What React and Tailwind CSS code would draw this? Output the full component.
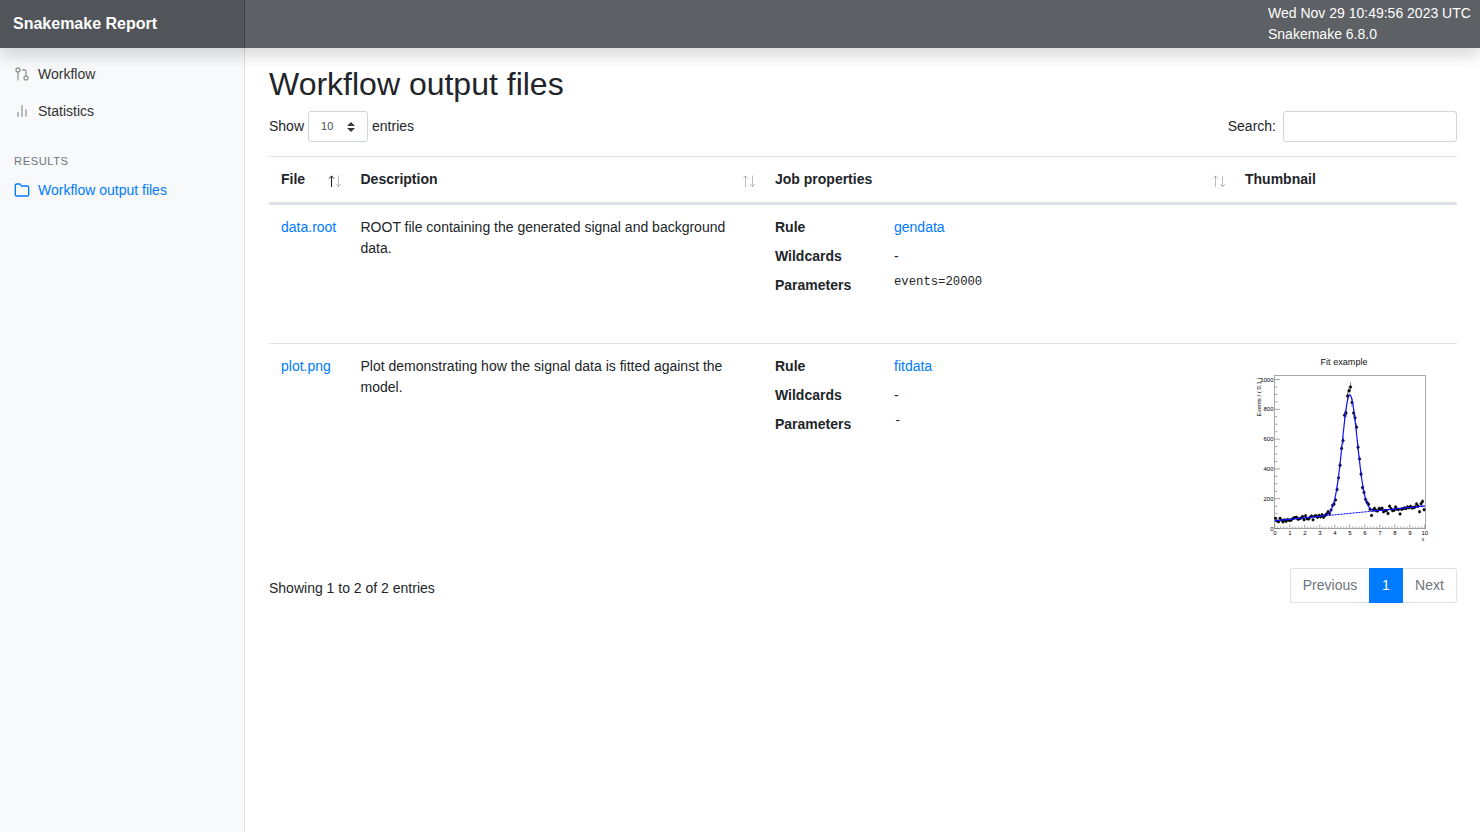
const POINTS = [
  [0.05, 68], [0.15, 50], [0.25, 45], [0.35, 68], [0.45, 56], [0.55, 44], [0.65, 58], [0.75, 48],
  [0.85, 60], [0.95, 55], [1.05, 54], [1.15, 62], [1.25, 70], [1.35, 73], [1.45, 75], [1.55, 62],
  [1.65, 66], [1.75, 70], [1.85, 80], [1.95, 58], [2.05, 86], [2.15, 66], [2.25, 63], [2.35, 75],
  [2.45, 84], [2.55, 58], [2.65, 83], [2.75, 86], [2.85, 75], [2.95, 88], [3.05, 78], [3.15, 92],
  [3.25, 75], [3.35, 88], [3.45, 98], [3.55, 112], [3.65, 101], [3.75, 124], [3.85, 155], [3.95, 164],
  [4.05, 192], [4.15, 262], [4.25, 340], [4.35, 425], [4.45, 537], [4.55, 590], [4.65, 760], [4.75, 775],
  [4.85, 890], [4.95, 925], [5.05, 950], [5.15, 845], [5.25, 775], [5.35, 742], [5.45, 680], [5.55, 545],
  [5.65, 467], [5.75, 365], [5.85, 275], [5.95, 242], [6.05, 195], [6.15, 175], [6.25, 162], [6.35, 130],
  [6.45, 88], [6.55, 124], [6.65, 135], [6.75, 120], [6.85, 118], [6.95, 135], [7.05, 130], [7.15, 136],
  [7.25, 112], [7.35, 120], [7.45, 120], [7.55, 100], [7.65, 150], [7.75, 132], [7.85, 120], [7.95, 122],
  [8.05, 145], [8.15, 130], [8.25, 128], [8.35, 98], [8.45, 130], [8.55, 133], [8.65, 138], [8.75, 135],
  [8.85, 145], [8.95, 140], [9.05, 148], [9.15, 138], [9.25, 140], [9.35, 145], [9.45, 165], [9.55, 150],
  [9.65, 112], [9.75, 166], [9.85, 182], [9.95, 126],
];
const px = (x) => 29.8 + x * 15;
const py = (y) => 172.5 - y * 0.149;
const background = (x) => 52 + x * 9.9;
const curve = (() => {
  let d = "";
  for (let i = 0; i <= 200; i++) {
    const x = i / 20;
    const y = background(x) + 795 * Math.exp(-((x - 5) ** 2) / (2 * 0.5 ** 2));
    d += `${i ? "L" : "M"}${px(x).toFixed(2)} ${py(y).toFixed(2)}`;
  }
  return d;
})();

function FitPlot() {
  return (
    <svg width="200" height="192" viewBox="0 0 200 192" className="block font-['Liberation_Sans',sans-serif]">
      <text x="99" y="9.4" fontSize="9" textAnchor="middle" fill="#111" textLength="47">Fit example</text>
      <rect x="29.5" y="19.5" width="151" height="153" fill="none" stroke="#aaa" strokeWidth="1" />
      <g stroke="#666" strokeWidth="0.6">
        {Array.from({ length: 21 }, (_, i) => (
          <path key={i} d={`M30 ${py(i * 50)}h${i % 4 ? 2.5 : 5}`} />
        ))}
        {Array.from({ length: 51 }, (_, i) => (
          <path key={i} d={`M${px(i / 5)} 172.5v${i % 5 ? -2 : -4}`} />
        ))}
      </g>
      <g fontSize="6" fill="#000">
        {[0, 200, 400, 600, 800, 1000].map((v) => (
          <text key={v} x="28.5" y={py(v) + 2.1} textAnchor="end">{v}</text>
        ))}
        {Array.from({ length: 11 }, (_, i) => (
          <text key={i} x={px(i)} y="179" textAnchor="middle">{i}</text>
        ))}
        <text x="178" y="185" fontSize="5" textAnchor="middle">x</text>
        <text transform="translate(15.6 60.5) rotate(-90)" textLength="39">Events / ( 0.1 )</text>
      </g>
      <path d={`M${px(0)} ${py(52)}L${px(10)} ${py(151)}`} stroke="#00f" strokeWidth="1" strokeDasharray="2.2 0.8" />
      <g fill="#000" stroke="#000" strokeWidth="0.5">
        {POINTS.map(([x, y]) => (
          <g key={x}>
            <path d={`M${px(x)} ${py(y + Math.sqrt(y))}V${py(y - Math.sqrt(y))}`} />
            <circle cx={px(x)} cy={py(y)} r="1.25" />
          </g>
        ))}
      </g>
      <path d={curve} fill="none" stroke="#1010ff" strokeWidth="1.2" />
    </svg>
  );
}

function Icon({ children, className }) {
  return (
    <svg width="16" height="16" viewBox="0 0 24 24" fill="none" stroke="currentColor" strokeWidth="2" strokeLinecap="round" strokeLinejoin="round" className={`relative -top-px ${className}`}>
      {children}
    </svg>
  );
}

function HeaderCell({ children, sort }) {
  return (
    <div className="flex justify-between p-3 pr-[7px] font-bold">
      <span>{children}</span>
      {sort && (
        <svg width="14" height="13" viewBox="0 0 14 13" fill="none" stroke="#212529" className="mt-[6px]">
          <path d="M3.5 12V0.8M1 3.6L3.5 1L6 3.6" opacity={sort === "asc" ? 1 : 0.3} />
          <path d="M10.5 0.5V11.7M8 9L10.5 11.6L13 9" opacity="0.3" />
        </svg>
      )}
    </div>
  );
}

function Row({ file, description, rule, parameters, thumbnail, className }) {
  return (
    <div className={`grid grid-cols-[79.5px_414.5px_470px_224px] border-t border-[#dee2e6] ${className}`}>
      <div className="p-3 whitespace-nowrap text-[#007bff]">{file}</div>
      <div className="p-3">{description}</div>
      <dl className="grid grid-cols-[119px_1fr] content-start gap-y-2 p-3">
        <dt className="font-bold">Rule</dt>
        <dd className="text-[#007bff]">{rule}</dd>
        <dt className="font-bold">Wildcards</dt>
        <dd>-</dd>
        <dt className="font-bold">Parameters</dt>
        <dd className="font-['Liberation_Mono',monospace] text-[12.25px] leading-[14px]">{parameters}</dd>
      </dl>
      <div className="p-3">{thumbnail}</div>
    </div>
  );
}

export default function App() {
  return (
    <div className="flex h-screen flex-col overflow-hidden bg-white font-['Liberation_Sans',Arial,sans-serif] text-sm leading-[21px] text-[#212529]">
      <header className="z-10 flex h-12 shrink-0 bg-[#5d6064] text-white shadow-[0_8px_16px_rgba(0,0,0,0.15)]">
        <div className="flex w-[245px] items-center bg-[#515459] pb-px pl-[13px] text-base font-bold shadow-[inset_-1px_0_0_rgba(0,0,0,0.25)]">
          Snakemake Report
        </div>
        <div className="ml-auto w-[212px] pt-[3px]">
          <div className="whitespace-nowrap">Wed Nov 29 10:49:56 2023 UTC</div>
          <div>Snakemake 6.8.0</div>
        </div>
      </header>
      <div className="flex min-h-0 flex-1">
        <nav className="w-[245px] shrink-0 bg-[#f8f9fa] pt-2 shadow-[inset_-1px_0_0_rgba(0,0,0,0.1)]">
          <div className="flex h-[37px] items-center gap-2 pl-[14px] text-[#333]">
            <Icon className="text-[#999]">
              <circle cx="18" cy="18" r="3" />
              <circle cx="6" cy="6" r="3" />
              <path d="M13 6h3a2 2 0 0 1 2 2v7M6 9v12" />
            </Icon>
            Workflow
          </div>
          <div className="flex h-[37px] items-center gap-2 pl-[14px] text-[#333]">
            <Icon className="text-[#999]">
              <path d="M18 20V10M12 20V4M6 20v-6" />
            </Icon>
            Statistics
          </div>
          <h6 className="mt-[22px] h-[18px] pl-[14px] text-[11.2px] leading-[18px] tracking-[0.55px] text-[#6c757d]">RESULTS</h6>
          <div className="mt-[2px] flex h-[37px] items-center gap-2 pl-[14px] text-[#007bff]">
            <Icon>
              <path d="M22 19a2 2 0 0 1-2 2H4a2 2 0 0 1-2-2V5a2 2 0 0 1 2-2h5l2 3h9a2 2 0 0 1 2 2z" />
            </Icon>
            Workflow output files
          </div>
        </nav>
        <main className="w-[1212px] pl-6 pt-[17px]">
          <h1 className="text-[32px] leading-[39px]">Workflow output files</h1>
          <div className="mt-[7px] flex h-[31px] items-center justify-between">
            <div className="flex items-center gap-1">
              Show
              <button className="flex h-[31px] w-[60px] items-center justify-between rounded-[3px] border border-[#ced4da] px-3 text-[11px] text-[#495057]">
                10
                <svg width="8" height="10" viewBox="0 0 4 5" fill="#343a40">
                  <path d="M2 0L0 2h4zm0 5L0 3h4z" />
                </svg>
              </button>
              entries
            </div>
            <label className="flex items-center gap-[7px]">
              Search:
              <input className="h-[31px] w-[174px] rounded-[3px] border border-[#ced4da] bg-white" />
            </label>
          </div>
          <div className="mt-[14px] grid h-12 grid-cols-[79.5px_414.5px_470px_224px] border-y border-b-2 border-[#dee2e6]">
            <HeaderCell sort="asc">File</HeaderCell>
            <HeaderCell sort="none">Description</HeaderCell>
            <HeaderCell sort="none">Job properties</HeaderCell>
            <HeaderCell>Thumbnail</HeaderCell>
          </div>
          <Row
            className="h-[139px]"
            file="data.root"
            description="ROOT file containing the generated signal and background data."
            rule="gendata"
            parameters="events=20000"
          />
          <Row
            className="h-[219px]"
            file="plot.png"
            description="Plot demonstrating how the signal data is fitted against the model."
            rule="fitdata"
            parameters="-"
            thumbnail={<FitPlot />}
          />
          <div className="mt-[6px] flex justify-between">
            <div className="pt-[10px]">Showing 1 to 2 of 2 entries</div>
            <div className="flex h-[35px] text-[#6c757d]">
              <span className="w-[79px] rounded-l-[3px] border border-r-0 border-[#dee2e6] py-[6px] text-center">Previous</span>
              <span className="w-[34px] bg-[#007bff] py-[7px] text-center text-white">1</span>
              <span className="w-[54px] rounded-r-[3px] border border-l-0 border-[#dee2e6] py-[6px] text-center">Next</span>
            </div>
          </div>
        </main>
      </div>
    </div>
  );
}
